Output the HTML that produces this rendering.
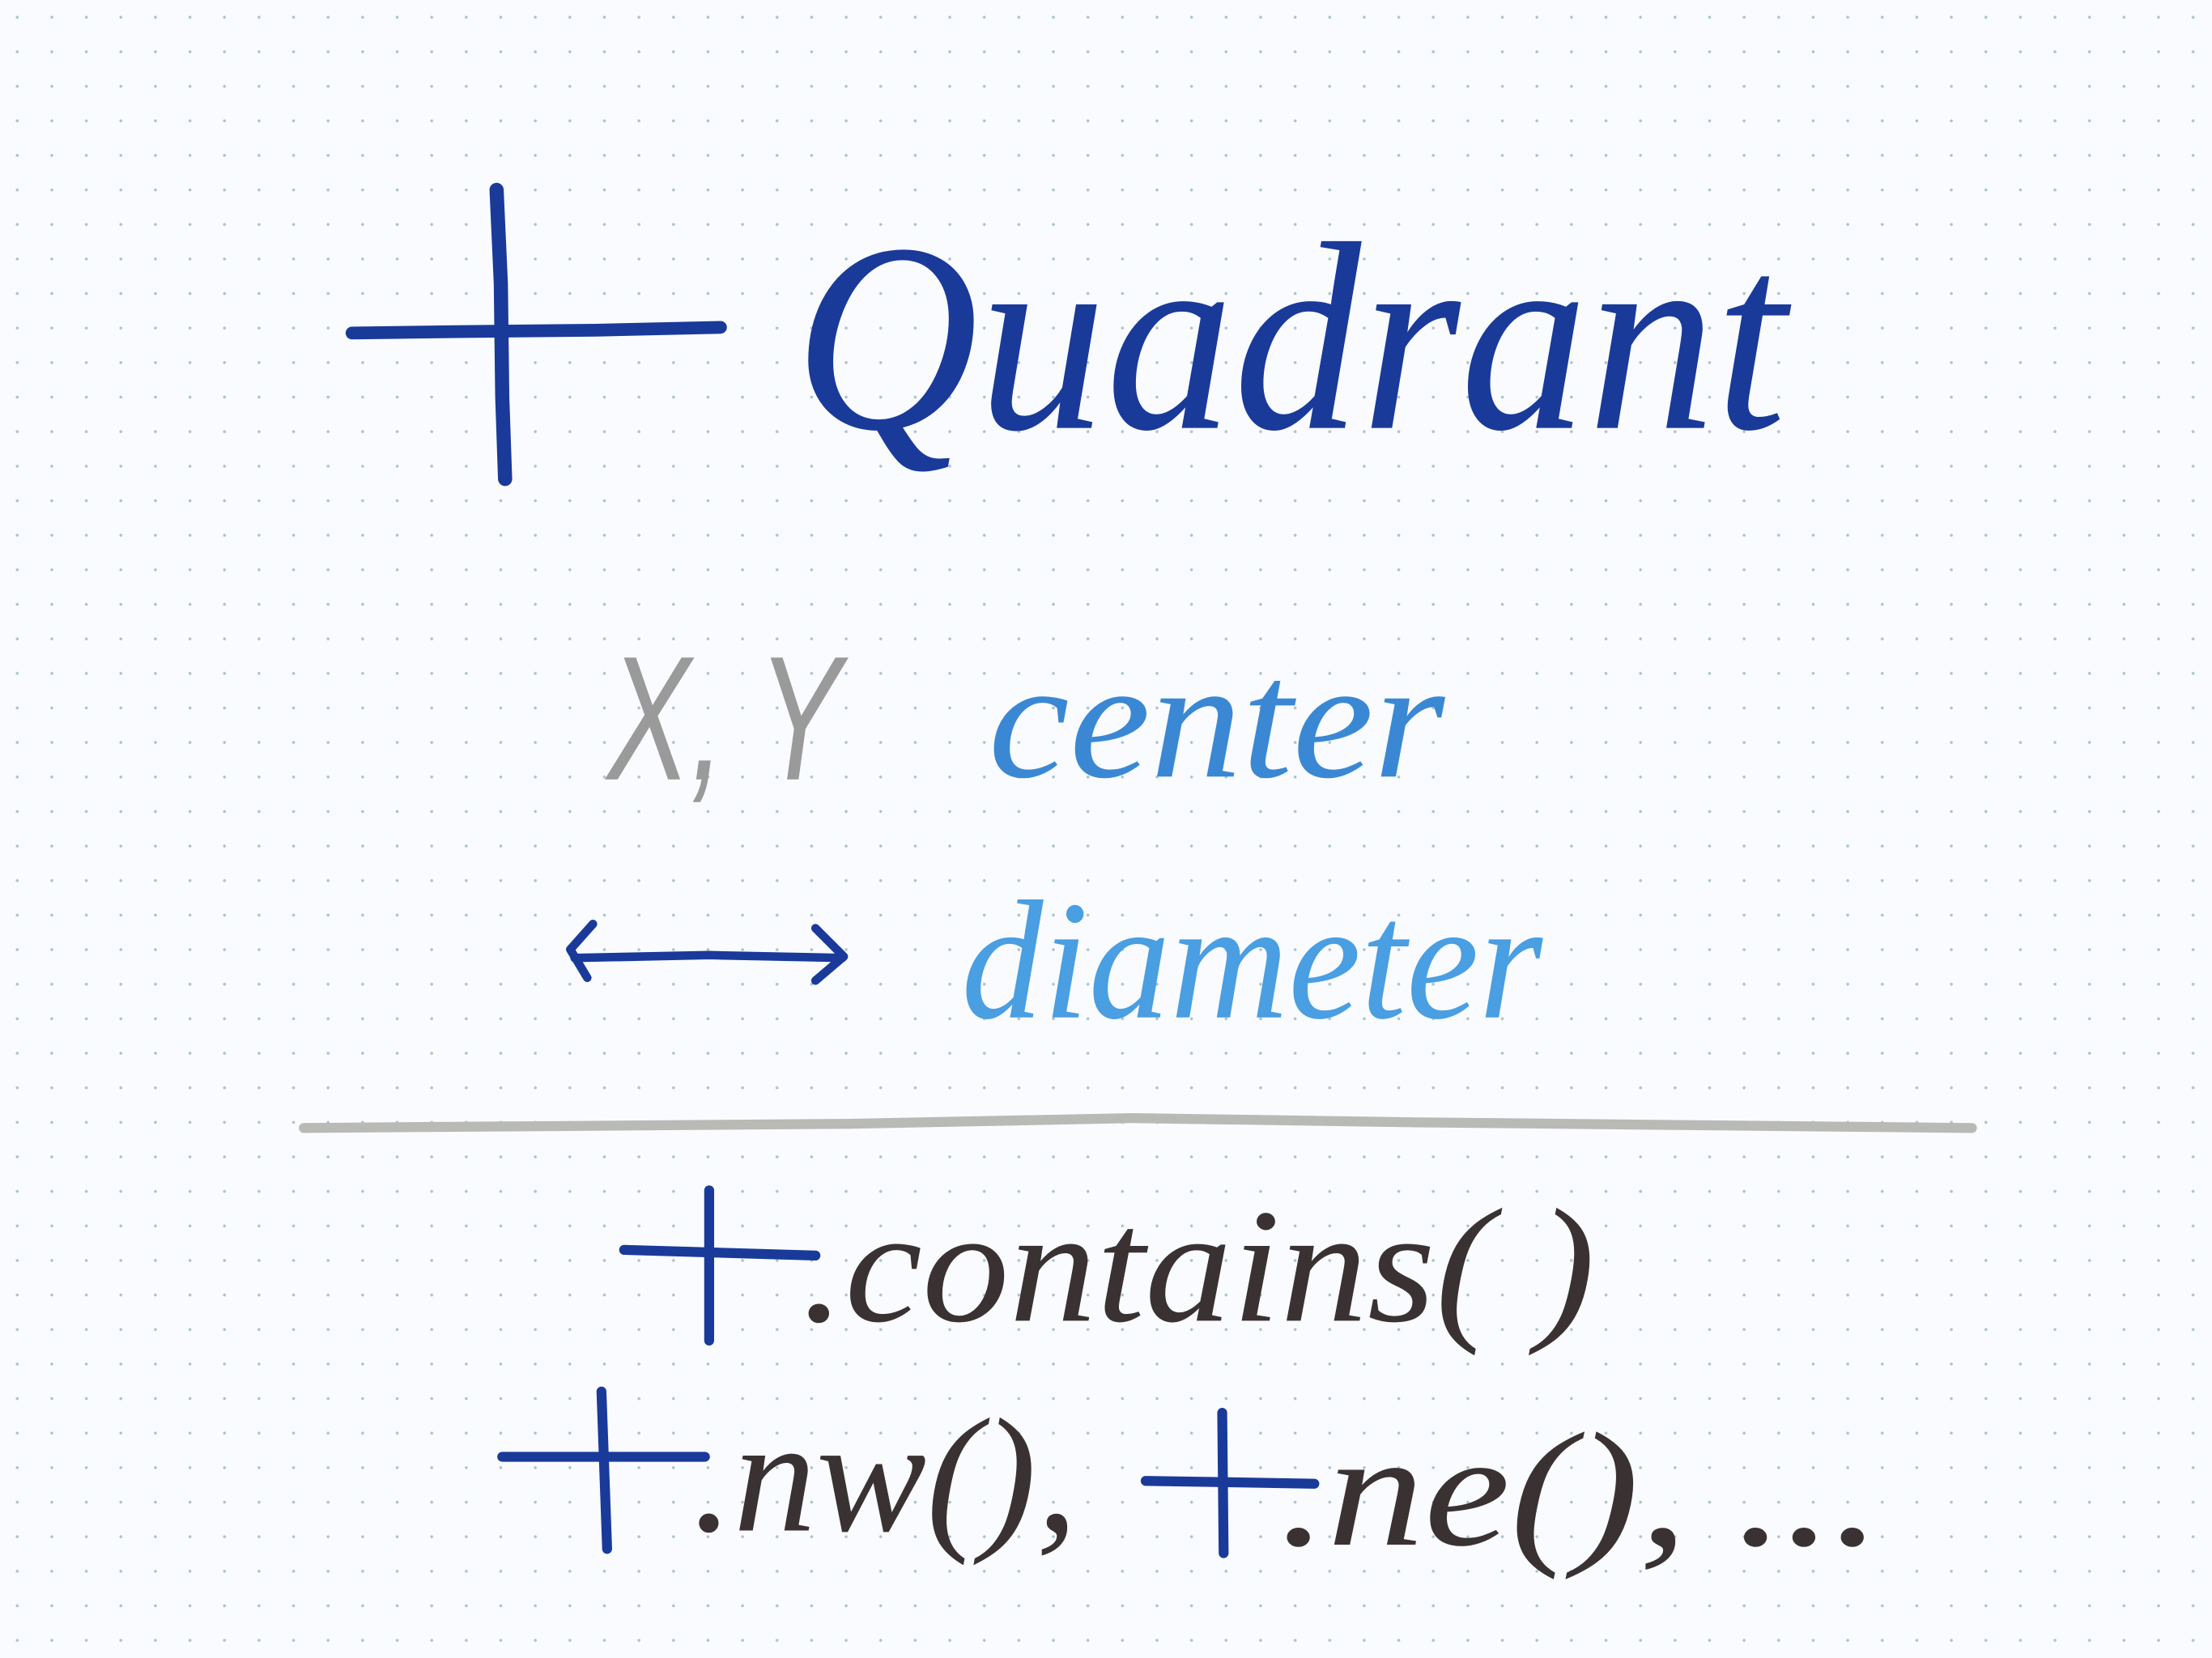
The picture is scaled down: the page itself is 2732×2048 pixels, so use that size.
<!DOCTYPE html>
<html><head><meta charset="utf-8"><style>
html,body{margin:0;padding:0}
body{width:2732px;height:2048px;overflow:hidden;background-color:#f9fbfe;
background-image:radial-gradient(circle,#a9c3cc 1.6px,transparent 2px);
background-size:42.67px 42.67px;background-position:0 0;}
svg{position:absolute;left:0;top:0}
text{font-family:"Liberation Serif",serif;font-style:italic}
</style></head><body>
<svg width="2732" height="2048" viewBox="0 0 1560 1170" xmlns="http://www.w3.org/2000/svg">
<g fill="none" stroke-linecap="round" stroke-linejoin="round">
<path d="M248 235 L322 234 L420 233 L508 231" stroke="#1a3a9a" stroke-width="9"/>
<path d="M350 134 L353 200 L354 280 L356 338" stroke="#1a3a9a" stroke-width="10"/>
<path d="M405 676 L500 674 L594 676" stroke="#1a3a9a" stroke-width="6"/>
<path d="M418 652 L402 670 L414 690" stroke="#1a3a9a" stroke-width="6"/>
<path d="M575 655 L595 675 L575 692" stroke="#1a3a9a" stroke-width="6"/>
<path d="M214 796 L600 793 L800 789 L1000 792 L1391 796" stroke="#b9b9b6" stroke-width="7"/>
<path d="M440 882 L575 886" stroke="#1a3a9a" stroke-width="7"/>
<path d="M500 840 L500 946" stroke="#1a3a9a" stroke-width="7"/>
<path d="M354 1028 L497 1028" stroke="#1a3a9a" stroke-width="7"/>
<path d="M424 982 L428 1093" stroke="#1a3a9a" stroke-width="7"/>
<path d="M808 1045 L927 1047" stroke="#1a3a9a" stroke-width="7"/>
<path d="M862 997 L863 1096" stroke="#1a3a9a" stroke-width="7"/>
</g>
<text x="560" y="302" font-size="190" fill="#1a3a9a" textLength="700" lengthAdjust="spacingAndGlyphs">Quadrant</text>
<text x="428" y="550" font-size="125" fill="#9a9a9a" font-style="normal" style="font-family:'Liberation Sans',sans-serif" textLength="165" lengthAdjust="spacingAndGlyphs">X, Y</text>
<text x="697" y="548" font-size="120" fill="#3a88d4" textLength="322" lengthAdjust="spacingAndGlyphs">center</text>
<text x="678" y="718" font-size="120" fill="#4a9ee2" textLength="410" lengthAdjust="spacingAndGlyphs">diameter</text>
<text x="565" y="932" font-size="115" fill="#3a3232" textLength="560" lengthAdjust="spacingAndGlyphs">.contains(    )</text>
<text x="488" y="1080" font-size="115" fill="#3a3232" textLength="272" lengthAdjust="spacingAndGlyphs">.nw(),</text>
<text x="902" y="1090" font-size="115" fill="#3a3232" textLength="425" lengthAdjust="spacingAndGlyphs">.ne(), ...</text>
</svg>
</body></html>
